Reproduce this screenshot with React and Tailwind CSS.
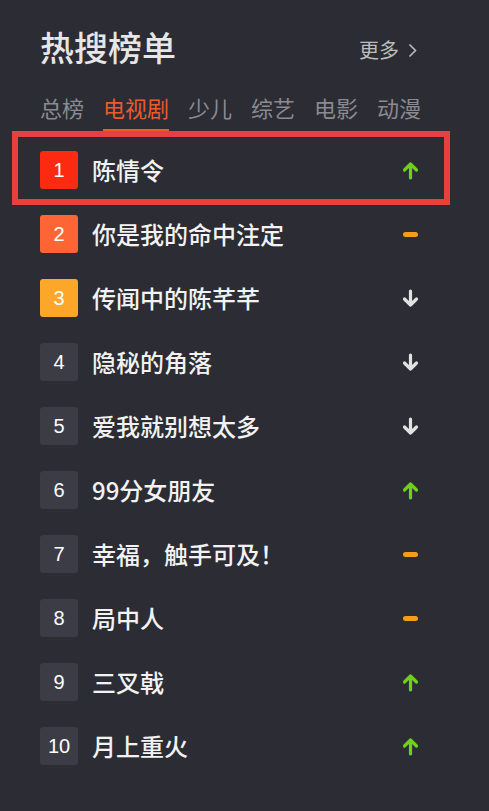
import React from "react";

const tabs = ["总榜", "电视剧", "少儿", "综艺", "电影", "动漫"];

const items = [
  { name: "陈情令", trend: "up" },
  { name: "你是我的命中注定", trend: "flat" },
  { name: "传闻中的陈芊芊", trend: "down" },
  { name: "隐秘的角落", trend: "down" },
  { name: "爱我就别想太多", trend: "down" },
  { name: "99分女朋友", trend: "up" },
  { name: "幸福，触手可及！", trend: "flat" },
  { name: "局中人", trend: "flat" },
  { name: "三叉戟", trend: "up" },
  { name: "月上重火", trend: "up" },
];

function badgeClass(rank) {
  if (rank === 1) return "bg-[#fb2a10]";
  if (rank === 2) return "bg-[#fd6535]";
  if (rank === 3) return "bg-[#fca62a]";
  return "bg-[#3b3c46]";
}

function Trend({ type }) {
  if (type === "flat") {
    return <div className="w-[15px] h-[5px] rounded-full bg-[#f59d1d]" />;
  }
  const color = type === "up" ? "#6fcf1b" : "#e2e2e2";
  return (
    <svg width="17" height="19" viewBox="0 0 17 19" fill="none">
      {type === "up" ? (
        <path d="M8.5 3 V17 M2.5 9 L8.5 3 L14.5 9" stroke={color} strokeWidth="3.2" strokeLinecap="round" strokeLinejoin="round" />
      ) : (
        <path d="M8.5 2 V16 M2.5 10 L8.5 16 L14.5 10" stroke={color} strokeWidth="3.2" strokeLinecap="round" strokeLinejoin="round" />
      )}
    </svg>
  );
}

export default function App() {
  return (
    <div
      className="w-[489px] h-[811px] bg-[#2b2c34] overflow-hidden"
      style={{ fontFamily: '"Noto Sans CJK SC", "Noto Sans", sans-serif' }}
    >
      {/* header */}
      <div className="pt-[24px] pl-[40px]">
        <div className="h-[46px] pr-[72px] flex items-center justify-between">
          <h1 className="text-[34px] leading-none font-medium text-[#e6e6e6]">热搜榜单</h1>
          <div className="flex items-center gap-[9px] text-[20px] leading-none text-[#bdbdbd] pt-[6px]">
            <span>更多</span>
            <svg width="9" height="15" viewBox="0 0 9 15" fill="none">
              <path d="M1.5 1.5 L7.5 7.5 L1.5 13.5" stroke="#bdbdbd" strokeWidth="1.6" />
            </svg>
          </div>
        </div>

        <div className="mt-[22px] flex gap-[19px] whitespace-nowrap">
          {tabs.map((t, i) => (
            <div key={t} className="flex flex-col shrink-0">
              <span
                className={
                  "h-[30px] leading-[30px] text-[22px] " +
                  (i === 1 ? "text-[#ee5a2c]" : "text-[#8a8a90]")
                }
              >
                {t}
              </span>
              <div className={"mt-[7px] h-[2px] " + (i === 1 ? "bg-[#ee5a2c]" : "")} />
            </div>
          ))}
        </div>
      </div>

      {/* list */}
      <div className="mt-[7px]">
        {items.map((it, idx) => {
          const rank = idx + 1;
          return (
            <div key={it.name} className="relative h-[64px] flex items-center pl-[40px] pr-[70px]">
              {rank === 1 && (
                <div className="absolute left-[12px] top-[-7px] w-[438px] h-[74px] border-[6px] border-[#e8403f]" />
              )}
              <div
                className={
                  "w-[38px] h-[38px] rounded-[3px] flex items-center justify-center text-white text-[20px] " +
                  badgeClass(rank)
                }
                style={{ fontFamily: '"Liberation Sans", Arial, sans-serif' }}
              >
                {rank}
              </div>
              <span className="ml-[14px] flex-1 text-[24px] leading-none font-medium text-[#f2f2f2]">{it.name}</span>
              <div className="w-[17px] flex justify-center">
                <Trend type={it.trend} />
              </div>
            </div>
          );
        })}
      </div>
    </div>
  );
}
